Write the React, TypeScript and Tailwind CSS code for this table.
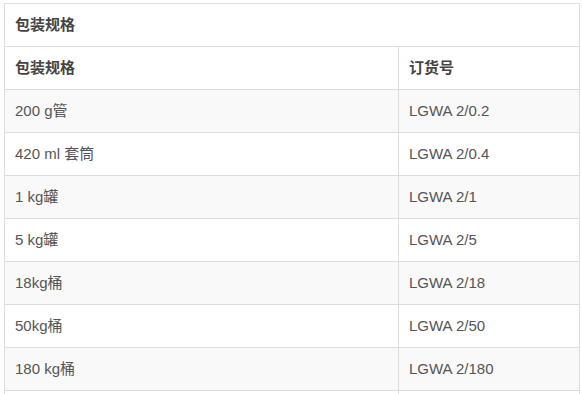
import React from "react";

const rows: [string, string][] = [
  ["200 g管", "LGWA 2/0.2"],
  ["420 ml 套筒", "LGWA 2/0.4"],
  ["1 kg罐", "LGWA 2/1"],
  ["5 kg罐", "LGWA 2/5"],
  ["18kg桶", "LGWA 2/18"],
  ["50kg桶", "LGWA 2/50"],
  ["180 kg桶", "LGWA 2/180"],
  ["", ""],
];

export default function App() {
  return (
    <div
      className="bg-white w-[582px] h-[394px] overflow-hidden pt-[3px] pl-[4px]"
      style={{ fontFamily: '"Liberation Sans", Arial, "Noto Sans CJK SC", sans-serif' }}
    >
      <div className="w-[576px] border border-[#ddd] text-[15px] text-[#555]">
        <div className="h-[42px] flex items-center px-[10px] font-bold text-[#444]">包装规格</div>
        <div className="flex h-[43px] border-t border-[#ddd] font-bold text-[#444]">
          <div className="w-[394px] flex items-center px-[10px] border-r border-[#ddd]">包装规格</div>
          <div className="flex-1 flex items-center px-[10px]">订货号</div>
        </div>
        {rows.map(([a, b], i) => (
          <div
            key={i}
            className={`flex h-[43px] border-t border-[#ddd] ${i % 2 === 0 ? "bg-[#f9f9f9]" : "bg-white"}`}
          >
            <div className="w-[394px] flex items-center px-[10px] border-r border-[#ddd]">{a}</div>
            <div className="flex-1 flex items-center px-[10px]">{b}</div>
          </div>
        ))}
      </div>
    </div>
  );
}
